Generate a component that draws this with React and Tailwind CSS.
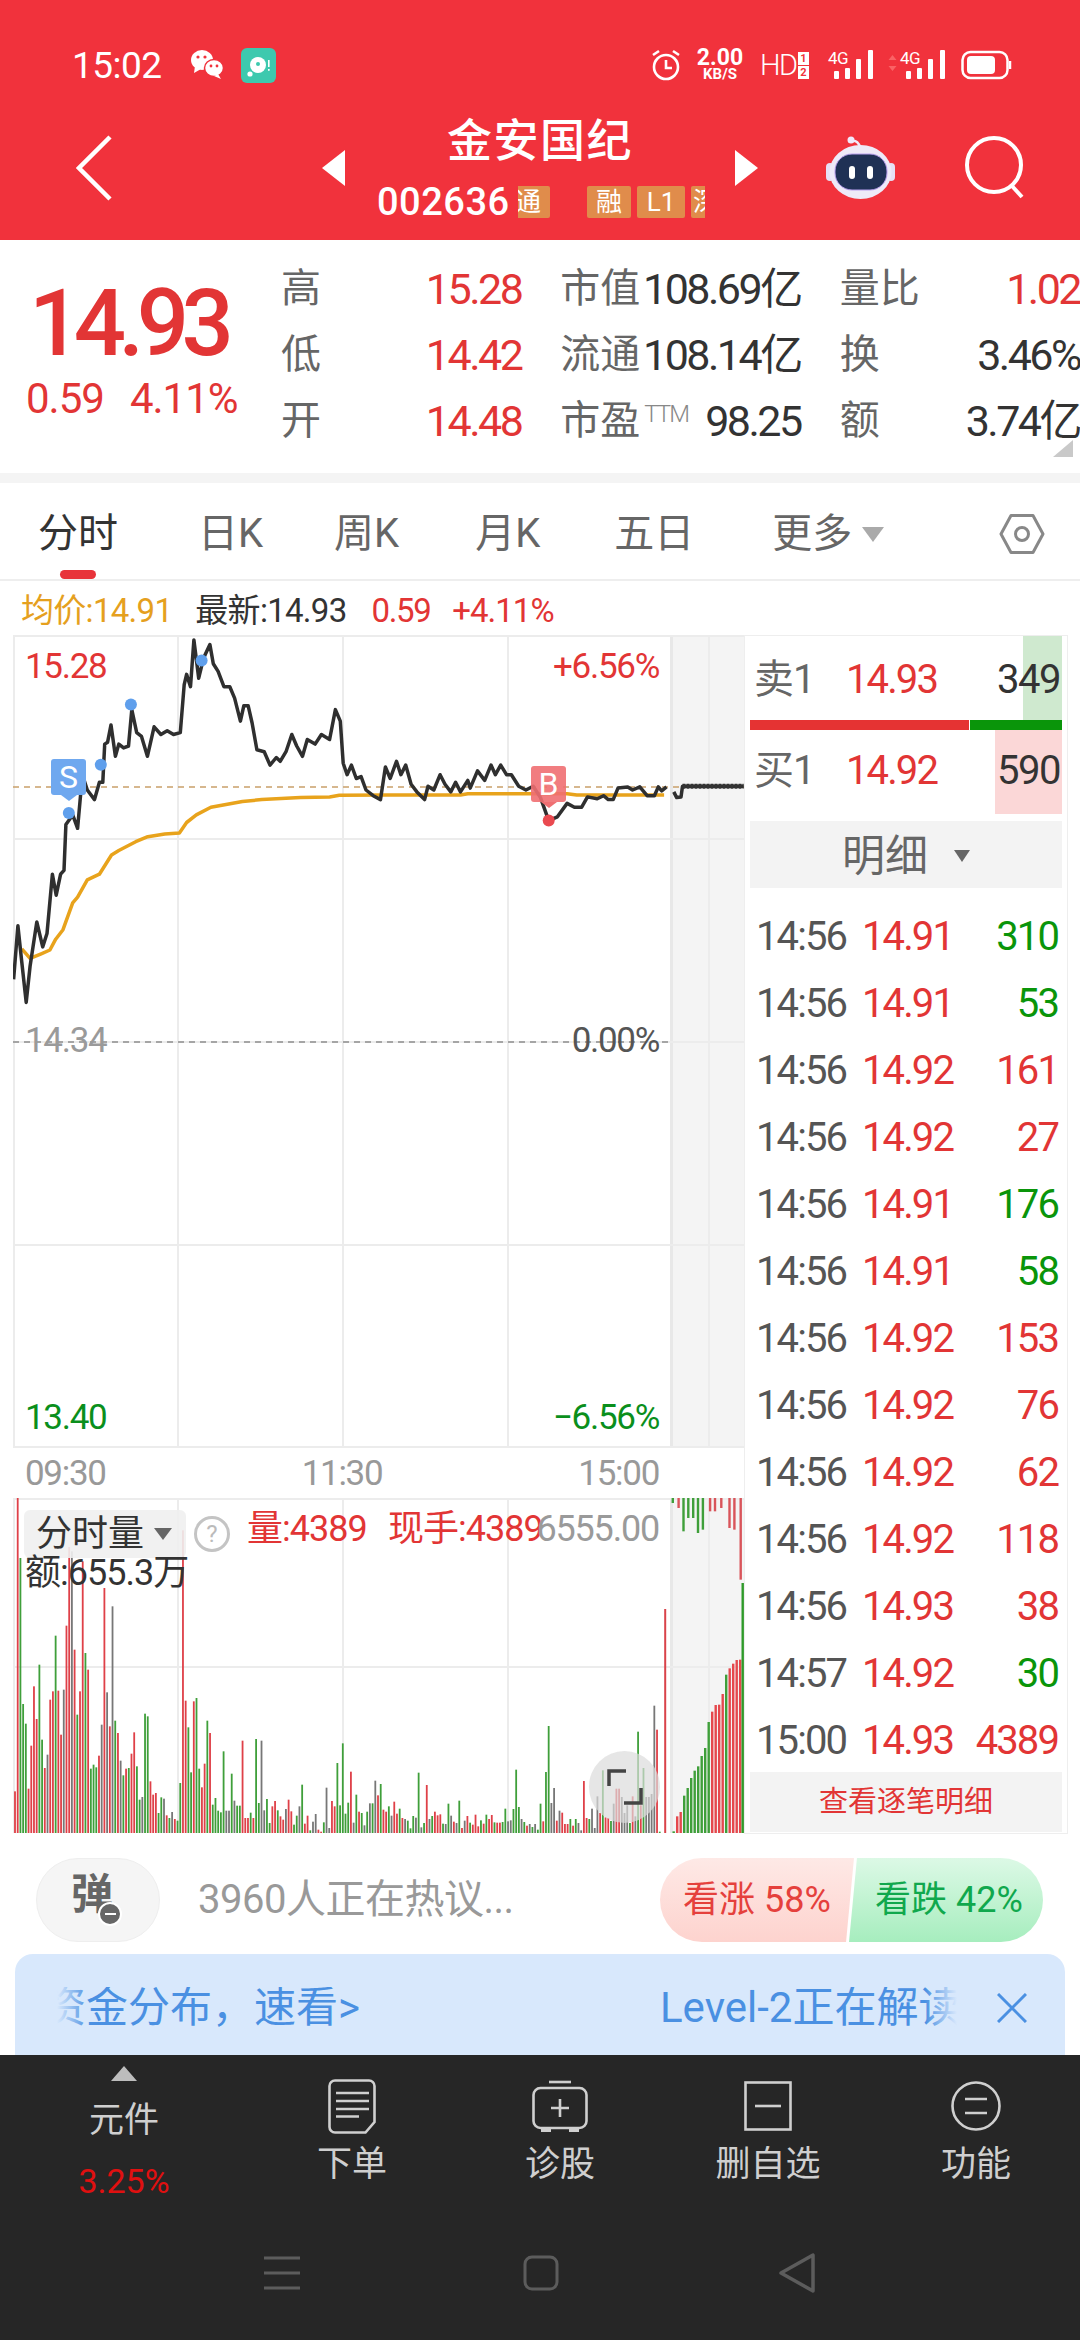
import React from 'react';

// price + avg lines, traced from the reference crop
const pricePts = [[28,1305],[37,1165],[45,1260],[54,1365],[62,1270],[76,1155],[88,1220],[97,1185],[108,1030],[116,1085],[125,1030],[132,1020],[136,900],[150,875],[160,910],[170,770],[180,810],[195,835],[205,790],[212,790],[216,690],[222,685],[229,640],[238,722],[245,690],[255,700],[265,695],[272,600],[282,660],[292,670],[304,722],[318,645],[332,665],[345,655],[358,665],[372,660],[380,535],[385,508],[393,540],[400,418],[410,518],[420,465],[433,430],[440,480],[450,500],[462,540],[474,540],[484,570],[496,630],[503,590],[512,590],[520,635],[530,705],[545,710],[557,745],[570,725],[578,735],[590,710],[602,665],[612,695],[624,722],[634,678],[650,690],[663,665],[680,678],[692,600],[702,630],[708,740],[716,770],[725,745],[735,780],[745,775],[755,810],[770,825],[785,835],[795,750],[805,780],[818,735],[827,770],[837,745],[848,795],[860,815],[876,835],[883,800],[895,810],[908,770],[918,795],[930,815],[940,790],[950,815],[965,785],[970,805],[985,760],[1000,785],[1013,745],[1022,770],[1033,745],[1045,770],[1055,770],[1070,800],[1085,810],[1100,800],[1115,830],[1132,890],[1150,880],[1170,845],[1185,855],[1200,855],[1212,828],[1232,833],[1245,825],[1255,835],[1265,835],[1275,805],[1295,802],[1305,810],[1320,802],[1335,825],[1350,825],[1358,802],[1365,812],[1375,802]];
const afterPts = [[1390,815],[1396,830],[1405,828],[1408,800],[1534,800]];
const avgPts = [[45,1225],[62,1250],[85,1238],[103,1228],[115,1200],[130,1175],[150,1105],[160,1090],[180,1045],[205,1030],[230,980],[245,968],[280,945],[305,932],[340,925],[370,922],[385,895],[405,875],[435,855],[500,840],[540,835],[620,830],[680,828],[700,824],[800,823],[950,823],[965,820],[1170,820],[1190,823],[1370,823]];
const cx = (z) => +(z / 2.063 - 13).toFixed(1);
const cy = (z) => +(z / 2.613 - 155).toFixed(1);
const line = (pts) => pts.map(([x, y]) => `${cx(x)},${cy(y)}`).join(' ');
const dots = [[142,870],[208,744],[270,587],[416,472]];

// c + top of bar in the crop, base 1030
const volA = 'r905 r25 g205 g643 g702 r897 r768 r590 r688 g525 g750 r835 x795 r630 r605 g438 r603 r735 x600 r408 r172 x185 r480 g675 r605 r215 g490 r540 g837 g825 g833 r798 x705 r295 x608 r710 x350 g693 r730 x813 g857 r837 g835 r792 r728 g830 g930 x922 g672 g680 r875 r915 r910 g970 g923 x927 r977 g985 x967 r988 g993 g880 r122 r633 g713 g848 r635 g625 g837 r893 r822 g693 r730 g945 g925 g963 g968 g785 x963 x963 g852 x933 g948 g948 r753'.split(' ');
// base 580
const volB = 'r535 r535 g519 r535 g298 g490 x303 x512 g478 g550 r500 r484 g512 r530 r540 x508 r480 r515 g555 g528 x500 g435 r552 r528 g572 x546 x523 r570 r576 g548 x444 x565 r484 r500 g370 g497 g311 g522 g489 r396 x549 g465 r516 g520 x557 g516 x491 g491 x423 r467 g433 r510 r516 g500 x528 r486 r522 g507 r535 x538 g543 g566 g529 x534 g399 x563 g550 r436 x538 g529 r516 r527 r524 g552 x553 g492 x528 r546 x550 g483 r565 x543 r529 g549 r555 r525 r560'.split(' ');
const volC = 'g542 r552 g525 r538 r526 g548 r549 r549 g547 g507 x545 x542 g508 g390 g502 x538 g547 r558 x553 g562 x553 g570 g492 r545 g397 g259 x490 x445 r543 x513 r519 r553 r553 g538 r558 g538 x550 x572 r424 r535 g538 x507 x565 x470 r520 g392 r533 r535 g544 x492 r447 r447 x472 x520 x497 g550 r470 x530 g276 r497 g385 x472 x472 x463 x198 r270 g576'.split(' ');
const barColor = { r: '#df4048', g: '#3f9f3a', x: '#777777' };
const bars = [
  ...volA.map((t) => [t[0], (1030 - +t.slice(1)) / 3]),
  ...volB.map((t) => [t[0], (580 - +t.slice(1)) / 3]),
  ...volC.map((t) => [t[0], (580 - +t.slice(1)) / 3]),
];
// bars past the close, in the grey zone
const lateBars = [['g',575],['r',530],['r',517],['g',468],['g',445],['g',415],['g',393],['g',380],['g',349],['g',325],['g',247],['r',216],['r',196],['r',195],['r',163],['g',105],['r',86],['r',72],['r',61],['r',60]];
const hangBars = [['g',1388,190],['r',1400,205],['g',1410,275],['g',1420,235],['g',1430,235],['g',1440,280],['g',1450,270],['r',1465,215],['r',1475,215],['r',1488,205],['r',1505,265],['r',1515,270],['r',1528,420]];

const ticks = [
  ['14:56','14.91','310','g'],['14:56','14.91','53','g'],['14:56','14.92','161','r'],['14:56','14.92','27','r'],
  ['14:56','14.91','176','g'],['14:56','14.91','58','g'],['14:56','14.92','153','r'],['14:56','14.92','76','r'],
  ['14:56','14.92','62','r'],['14:56','14.92','118','r'],['14:56','14.93','38','r'],['14:57','14.92','30','g'],['15:00','14.93','4389','r'],
];

function Grid({ height, rows }) {
  return (
    <>
      <rect x="658" y="0" width="73" height={height} fill="#f4f4f4" />
      {[0, 164, 329, 494, 695].map((x) => <rect key={x} x={x} y="0" width="2" height={height} fill="#ececec" />)}
      <rect x="657" y="0" width="3" height={height} fill="#e8e8e8" />
      {rows.map((y) => <rect key={y} x="0" y={y} width="731" height="2" fill="#ececec" />)}
    </>
  );
}

function PriceChart() {
  return (
    <div className="relative h-[813px] w-[731px] text-[35px] leading-none tracking-[-1.3px]">
      <svg className="absolute inset-0" width="731" height="813">
        <Grid height={813} rows={[0, 203, 406, 609, 811]} />
        <line x1="0" x2="731" y1="152" y2="152" stroke="#c9a06a" strokeWidth="1.5" strokeDasharray="6 5" />
        <line x1="0" x2="660" y1="407" y2="407" stroke="#a5a5a5" strokeWidth="2" strokeDasharray="6 5" />
        <polyline points={line(avgPts)} fill="none" stroke="#e8a31c" strokeWidth="3.5" strokeLinejoin="round" />
        <polyline points={line(pricePts)} fill="none" stroke="#2f2f2f" strokeWidth="3.5" strokeLinejoin="round" />
        <polyline points={line(afterPts)} fill="none" stroke="#2f2f2f" strokeWidth="3.5" strokeLinejoin="round" />
        <line x1={cx(1408)} x2={cx(1534)} y1={cy(800)} y2={cy(800)} stroke="#333" strokeWidth="5" strokeDasharray="3 1" />
        {dots.map(([x, y]) => <circle key={x} cx={cx(x)} cy={cy(y)} r="6" fill="#5f9fec" />)}
        <circle cx={cx(1132)} cy={cy(890)} r="6" fill="#ea4a50" />
      </svg>
      <span className="absolute left-[12px] top-[14px] text-[#e23535]">15.28</span>
      <span className="absolute right-[85px] top-[14px] text-[#e23535]">+6.56%</span>
      <span className="absolute left-[12px] top-[388px] text-[#9a9a9a]">14.34</span>
      <span className="absolute right-[85px] top-[388px] text-[#555]">0.00%</span>
      <span className="absolute left-[12px] top-[765px] text-[#0a8f1c]">13.40</span>
      <span className="absolute right-[85px] top-[765px] text-[#0a8f1c]">−6.56%</span>
      <Marker left={38} top={124} bg="bg-[#6fa8ef]" tail="border-t-[#6fa8ef]" label="S" />
      <Marker left={518} top={131} bg="bg-[#ef6f72]/90" tail="border-t-[#ef6f72]" label="B" />
    </div>
  );
}

function Marker({ left, top, bg, tail, label }) {
  return (
    <div className="absolute flex flex-col items-center" style={{ left, top }}>
      <div className={`flex h-[36px] w-[35px] items-center justify-center rounded-[3px] text-[32px] tracking-normal text-white ${bg}`}>{label}</div>
      <div className={`h-0 w-0 border-x-[8px] border-t-[6px] border-x-transparent ${tail}`} />
    </div>
  );
}

function VolumeChart() {
  return (
    <div className="relative h-[335px] w-[731px] leading-none">
      <svg className="absolute inset-0" width="731" height="335">
        <Grid height={335} rows={[0, 168]} />
        {bars.map(([c, h], i) => (
          <rect key={i} x={2 + i * 2.709 - 0.9} y={335 - h} width="1.8" height={h} fill={barColor[c]} />
        ))}
        <rect x="651.2" y="111" width="2" height="224" fill="#d9434a" />
        {lateBars.map(([c, top], i) => {
          const h = (580 - top) / 3;
          return <rect key={i} x={659.5 + i * 3.5} y={335 - h} width="2.4" height={h} fill={c === 'r' ? '#e5484d' : '#3f9f3a'} />;
        })}
        <rect x="728.5" y="85" width="2.4" height="250" fill="#2f9a2a" />
        {hangBars.map(([c, x, b]) => (
          <rect key={x} x={cx(x) - 1.2} y="0" width="2.4" height={(b - 175) / 3} fill={c === 'r' ? '#d9545a' : '#3f9f3a'} />
        ))}
      </svg>
      <div className="absolute left-[11px] top-[12px] flex h-[48px] w-[162px] items-center rounded-[6px] bg-[#efefef]/90 pl-[12px] text-[36px] text-[#333]">
        分时量
        <div className="ml-[10px] h-0 w-0 border-x-[9px] border-t-[12px] border-x-transparent border-t-[#666]" />
      </div>
      <div className="absolute left-[181px] top-[18px] flex h-[36px] w-[36px] items-center justify-center rounded-full border-[3px] border-[#c4c4c4] text-[24px] text-[#bbb]">?</div>
      <span className="absolute left-[234px] top-[13px] text-[36px] tracking-[-1px] text-[#e23535]">量:4389</span>
      <span className="absolute left-[375px] top-[13px] text-[36px] tracking-[-1px] text-[#e23535]">现手:4389</span>
      <span className="absolute right-[85px] top-[13px] text-[36px] tracking-[-1.2px] text-[#9a9a9a]">6555.00</span>
      <span className="absolute left-[12px] top-[57px] text-[36px] tracking-[-1px] text-[#333]">额:655.3万</span>
      <div className="absolute left-[576px] top-[253px] flex h-[72px] w-[71px] items-center justify-center rounded-full bg-[#dcdcdc]/70">
        <svg width="40" height="40" viewBox="0 0 40 40" fill="none" stroke="#444" strokeWidth="3.5">
          <path d="M4 19V4h17" />
          <path d="M36 21v15H19" />
        </svg>
      </div>
    </div>
  );
}

function DepthPanel() {
  return (
    <div className="flex h-[1199px] w-[324px] flex-col border border-[#eeeeee] px-[5px] leading-none">
      <div className="relative flex h-[84px] items-center pt-[3px] text-[40px]">
        <div className="absolute bottom-0 right-0 top-0 w-[39px] bg-[#cfe9cf]" />
        <span className="relative ml-[4px] w-[92px] tracking-[-1px] text-[#666]">卖1</span>
        <span className="relative tracking-[-1.9px] text-[#e23535]">14.93</span>
        <span className="relative ml-auto mr-[2px] tracking-[-1.5px] text-[#333]">349</span>
      </div>
      <div className="flex h-[10px]">
        <div className="w-[219px] bg-[#e53333]" />
        <div className="ml-[1px] flex-1 bg-[#0a950a]" />
      </div>
      <div className="relative flex h-[84px] items-center pb-[3px] text-[40px]">
        <div className="absolute bottom-0 right-0 top-0 w-[67px] bg-[#fbd7d7]" />
        <span className="relative ml-[4px] w-[92px] tracking-[-1px] text-[#666]">买1</span>
        <span className="relative tracking-[-1.9px] text-[#e23535]">14.92</span>
        <span className="relative ml-auto mr-[2px] tracking-[-1.5px] text-[#333]">590</span>
      </div>
      <div className="mt-[7px] flex h-[67px] items-center justify-center bg-[#f3f3f3] pt-[3px] text-[43px] text-[#666]">
        明细
        <div className="ml-[26px] h-0 w-0 border-x-[8px] border-t-[12px] border-x-transparent border-t-[#666]" />
      </div>
      <div className="mt-[15px]">
        {ticks.map(([time, price, vol, c], i) => (
          <div key={i} className="flex h-[67px] items-center text-[40px] tracking-[-1.9px]">
            <span className="ml-[6px] w-[106px] text-[#555]">{time}</span>
            <span className="text-[#e23535]">{price}</span>
            <span className={`ml-auto mr-[4px] ${c === 'g' ? 'text-[#0a950a]' : 'text-[#e23535]'}`}>{vol}</span>
          </div>
        ))}
      </div>
      <div className="-mt-[2px] flex h-[60px] items-center justify-center bg-[#f3f3f3] text-[29px] text-[#e23535]">查看逐笔明细</div>
    </div>
  );
}

function StatusBar() {
  return (
    <div className="flex h-[100px] items-center pt-[30px] text-white">
      <span className="ml-[72px] w-[91px] text-[37px] leading-none tracking-[-0.5px]">15:02</span>
      <svg className="ml-[27px]" width="34" height="32" viewBox="0 0 34 32" fill="white">
        <ellipse cx="12" cy="11" rx="11" ry="10" />
        <path d="M5 17l-1 7 7-4z" />
        <ellipse cx="24" cy="19" rx="9.5" ry="8.5" stroke="#f1323c" strokeWidth="1.5" />
        <path d="M28 25l3 5-7-3z" />
        <circle cx="8" cy="8" r="1.6" fill="#f1323c" /><circle cx="15" cy="8" r="1.6" fill="#f1323c" />
        <circle cx="21" cy="17" r="1.4" fill="#f1323c" /><circle cx="27" cy="17" r="1.4" fill="#f1323c" />
      </svg>
      <svg className="ml-[17px]" width="35" height="35" viewBox="0 0 35 35">
        <rect width="35" height="35" rx="6" fill="#3dc9ae" />
        <circle cx="17" cy="17" r="8" fill="white" />
        <circle cx="17" cy="16" r="2" fill="#3dc9ae" />
        <circle cx="9" cy="26" r="2.6" fill="white" />
        <rect x="27" y="12" width="1.6" height="7" fill="white" /><rect x="27" y="21" width="1.6" height="1.8" fill="white" />
      </svg>
      <svg className="ml-[375px]" width="30" height="32" viewBox="0 0 30 32" fill="none" stroke="white" strokeWidth="2.6">
        <circle cx="15" cy="18" r="12" />
        <path d="M15 11v8h6M2 6l6-4M28 6l-6-4" />
      </svg>
      <div className="ml-[15px] flex w-[48px] flex-col items-center font-bold leading-none">
        <span className="h-[19px] text-[23px] leading-[19px]">2.00</span>
        <span className="h-[15px] text-[15px] leading-[15px]">KB/S</span>
      </div>
      <span className="ml-[16px] w-[38px] text-[29px] font-light leading-none tracking-[-1.5px]">HD</span>
      <div className="flex w-[11px] flex-col gap-[1px] text-center text-[11px] font-bold leading-[13px] text-[#f1323c]">
        <span className="h-[13px] bg-white">1</span>
        <span className="h-[13px] bg-white">2</span>
      </div>
      <Signal className="ml-[19px]" />
      <svg className="ml-[14px]" width="9" height="30" viewBox="0 0 9 30" fill="#f77" opacity="0.7">
        <path d="M4.5 5l4 5h-8zM4.5 21l4-5h-8z" />
      </svg>
      <Signal className="ml-[3px]" />
      <svg className="ml-[15px]" width="51" height="30" viewBox="0 0 51 30" fill="none">
        <rect x="1.5" y="2" width="45" height="26" rx="8" stroke="white" strokeWidth="2.5" />
        <rect x="6" y="6" width="28" height="18" rx="4" fill="white" />
        <path d="M49 11v8" stroke="white" strokeWidth="2.5" />
      </svg>
    </div>
  );
}

function Signal({ className }) {
  return (
    <div className={`relative h-[30px] w-[46px] ${className}`}>
      <span className="absolute left-0 top-0 text-[17px] leading-[17px] tracking-[-0.5px]">4G</span>
      <svg className="absolute inset-0" width="46" height="30" viewBox="0 0 46 30" fill="white">
        <rect x="6" y="21" width="5" height="8" rx="1" />
        <rect x="17" y="18" width="5" height="11" rx="1" />
        <rect x="28" y="9" width="5" height="20" rx="1" />
        <rect x="40" y="0" width="5" height="29" rx="1" />
      </svg>
    </div>
  );
}

function Robot() {
  return (
    <svg width="69" height="64" viewBox="0 0 69 64">
      <path d="M25 5c4-1 7 0 9 6" fill="none" stroke="#f1e9fb" strokeWidth="2.5" />
      <circle cx="25" cy="4" r="3.5" fill="#f1e9fb" />
      <rect x="0" y="27" width="8" height="18" rx="4" fill="#e6e0f5" />
      <rect x="61" y="27" width="8" height="18" rx="4" fill="#e6e0f5" />
      <ellipse cx="34.5" cy="36" rx="31" ry="27" fill="#eeeaf8" />
      <rect x="9" y="18" width="52" height="36" rx="17" fill="#1f3155" stroke="#b9a0ee" strokeWidth="1" />
      <rect x="23" y="30" width="6" height="13" rx="3" fill="white" />
      <rect x="41" y="30" width="6" height="13" rx="3" fill="white" />
    </svg>
  );
}

function Header() {
  const badge = 'flex h-[32px] shrink-0 items-center justify-center overflow-hidden rounded-[2px] bg-[#e08c4b] text-[26px] text-white';
  return (
    <div className="h-[240px] shrink-0 bg-[#f1323c] text-white">
      <StatusBar />
      <div className="flex h-[136px] items-center leading-none">
        <svg className="ml-[76px]" width="36" height="66" viewBox="0 0 36 66" fill="none" stroke="white" strokeWidth="4.5">
          <path d="M34 2L3 33l31 31" />
        </svg>
        <div className="ml-[210px] h-0 w-0 border-y-[18px] border-r-[23px] border-y-transparent border-r-white" />
        <div className="flex w-[390px] flex-col">
          <div className="text-center text-[45px] font-medium leading-[48px] tracking-[1.5px]">金安国纪</div>
          <div className="mt-[20px] flex h-[32px] items-center pl-[32px]">
            <span className="w-[141px] text-[38px] font-medium tracking-[0.5px]">002636</span>
            <div className="flex w-[187px] gap-[6px] overflow-hidden">
              <div className={`-ml-[12px] mr-[31px] w-[44px] ${badge}`}>通</div>
              <div className={`w-[44px] ${badge}`}>融</div>
              <div className={`w-[48px] ${badge}`}>L1</div>
              <div className={`w-[44px] justify-start pl-[2px] ${badge}`}>深</div>
            </div>
          </div>
        </div>
        <div className="h-0 w-0 border-y-[18px] border-l-[23px] border-y-transparent border-l-white" />
        <div className="ml-[68px]"><Robot /></div>
        <svg className="ml-[70px]" width="62" height="64" viewBox="0 0 62 64" fill="none" stroke="white" strokeWidth="4">
          <circle cx="29" cy="29" r="27" />
          <path d="M47 50l10 11" />
        </svg>
      </div>
    </div>
  );
}

function Cell({ label, value, red, sup }) {
  return (
    <div className="flex items-center justify-between whitespace-nowrap">
      <span className="text-[40px] text-[#666]">
        {label}
        {sup ? <sup className="ml-[4px] text-[24px] font-light tracking-[-2px] text-[#888]">{sup}</sup> : null}
      </span>
      <span className={`text-[43px] tracking-[-2.5px] ${red ? 'text-[#e23535]' : 'text-[#333]'}`}>{value}</span>
    </div>
  );
}

function InfoPanel() {
  return (
    <div className="relative flex h-[233px] shrink-0 leading-none">
      <div className="w-[281px] pl-[29px] pt-[38px] text-[#e23535]">
        <div className="text-[92px] font-medium leading-[92px] tracking-[-7.5px]">14.93</div>
        <div className="ml-[-3px] mt-[8px] flex gap-[26px] text-[42px] leading-[42px] tracking-[-1px]">
          <span>0.59</span>
          <span>4.11%</span>
        </div>
      </div>
      <div className="grid h-[214px] w-[799px] grid-cols-3 grid-rows-3 gap-x-[39px] pt-[16px]">
        <Cell label="高" value="15.28" red />
        <Cell label="市值" value="108.69亿" />
        <Cell label="量比" value="1.02" red />
        <Cell label="低" value="14.42" red />
        <Cell label="流通" value="108.14亿" />
        <Cell label="换" value="3.46%" />
        <Cell label="开" value="14.48" red />
        <Cell label="市盈" sup="TTM" value="98.25" />
        <Cell label="额" value="3.74亿" />
      </div>
      <div className="absolute bottom-[16px] right-[7px] h-0 w-0 border-b-[17px] border-l-[20px] border-b-[#c9c9c9] border-l-transparent" />
    </div>
  );
}

function Tabs() {
  return (
    <div className="relative flex h-[98px] shrink-0 items-center border-b-2 border-[#eeeeee] pt-[6px] text-[40px] leading-none text-[#666]">
      <span className="ml-[38px] text-[#333]">分时</span>
      <span className="ml-[80px]">日K</span>
      <span className="ml-[71px]">周K</span>
      <span className="ml-[76px]">月K</span>
      <span className="ml-[74px]">五日</span>
      <span className="ml-[78px]">更多</span>
      <div className="ml-[10px] h-0 w-0 border-x-[11px] border-t-[15px] border-x-transparent border-t-[#aaa]" />
      <svg className="ml-[115px]" width="46" height="42" viewBox="0 0 46 42" fill="none" stroke="#888" strokeWidth="3">
        <path d="M12 2.5h22L44 21 34 39.5H12L2 21z" strokeLinejoin="round" />
        <circle cx="23" cy="21" r="6.5" />
      </svg>
      <div className="absolute bottom-0 left-[60px] h-[9px] w-[36px] rounded-full bg-[#e8333a]" />
    </div>
  );
}

function NavIcon({ children }) {
  return <div className="flex h-[56px] items-center justify-center">{children}</div>;
}

function BottomNav() {
  const item = 'flex w-[208px] flex-col items-center pt-[23px] text-[35px] leading-none text-[#cfcfcf]';
  return (
    <div className="h-[285px] shrink-0 bg-[#262626]">
      <div className="flex h-[190px]">
        <div className="flex w-[248px] flex-col items-center pt-[11px] leading-none">
          <div className="h-0 w-0 border-x-[13px] border-b-[15px] border-x-transparent border-b-[#bdbdbd]" />
          <span className="mt-[22px] text-[35px] text-[#cfcfcf]">元件</span>
          <span className="mt-[26px] text-[34px] text-[#e01010]">3.25%</span>
        </div>
        <div className={item}>
          <NavIcon>
            <svg width="48" height="55" viewBox="0 0 48 55" fill="none" stroke="#cfcfcf" strokeWidth="2.6">
              <path d="M7 1.5h34a5.5 5.5 0 0 1 5.5 5.5v36l-9 10.500H7A5.500 5.500 0 0 1 1.500 48V7A5.500 5.500 0 0 1 7 1.500z" />
              <path d="M8 14h33M8 22h33M8 30h33M8 37.500h23" />
            </svg>
          </NavIcon>
          <span className="mt-[13px]">下单</span>
        </div>
        <div className={item}>
          <NavIcon>
            <svg width="56" height="52" viewBox="0 0 56 52" fill="none" stroke="#cfcfcf" strokeWidth="2.6">
              <path d="M17 2h22" />
              <rect x="1.500" y="8" width="53" height="40" rx="7" />
              <path d="M28 19v18M19 28h18" />
              <path d="M9 50h10M37 50h10" strokeWidth="4" />
            </svg>
          </NavIcon>
          <span className="mt-[13px]">诊股</span>
        </div>
        <div className={item}>
          <NavIcon>
            <svg width="48" height="50" viewBox="0 0 48 50" fill="none" stroke="#cfcfcf" strokeWidth="2.6">
              <rect x="1.500" y="1.500" width="45" height="47" />
              <path d="M11 25h26" />
            </svg>
          </NavIcon>
          <span className="mt-[13px]">删自选</span>
        </div>
        <div className={item}>
          <NavIcon>
            <svg width="50" height="50" viewBox="0 0 50 50" fill="none" stroke="#cfcfcf" strokeWidth="2.6">
              <circle cx="25" cy="25" r="23.500" />
              <path d="M14 18h22M14 32h22" />
            </svg>
          </NavIcon>
          <span className="mt-[13px]">功能</span>
        </div>
      </div>
      <div className="flex h-[56px] items-center pl-[264px]">
        <svg width="36" height="34" viewBox="0 0 36 34" fill="none" stroke="#5c5c5c" strokeWidth="3">
          <path d="M0 2h36M0 17h36M0 32h36" />
        </svg>
        <svg className="ml-[223px]" width="36" height="36" viewBox="0 0 36 36" fill="none" stroke="#5c5c5c" strokeWidth="3">
          <rect x="2" y="2" width="32" height="32" rx="7" />
        </svg>
        <svg className="ml-[219px]" width="38" height="40" viewBox="0 0 38 40" fill="none" stroke="#5c5c5c" strokeWidth="3.5" strokeLinejoin="round">
          <path d="M35 2v36L3 20z" />
        </svg>
      </div>
    </div>
  );
}

function Footer() {
  return (
    <div className="h-[197px] shrink-0 leading-none">
      <div className="flex h-[84px] items-center pl-[36px]">
        <div className="relative flex h-[84px] w-[124px] items-center justify-center rounded-[42px] border border-[#eeeeee] bg-[#f5f5f5] pb-[10px] pr-[12px] text-[42px] font-bold text-[#666]">
          弹
          <div className="absolute bottom-[15px] right-[37px] flex h-[24px] w-[24px] items-center justify-center rounded-full border-2 border-white bg-[#666]">
            <div className="h-[2px] w-[11px] bg-white" />
          </div>
        </div>
        <span className="ml-[38px] w-[462px] text-[40px] tracking-[-0.5px] text-[#999]">3960人正在热议...</span>
        <div className="flex h-[84px] w-[383px] text-[36px]">
          <div className="flex w-[194px] items-center rounded-l-[42px] bg-gradient-to-b from-[#fee9e6] to-[#fdd3ce] pl-[23px] text-[#e5403c] [clip-path:polygon(0_0,100%_0,95.9%_100%,0_100%)]">看涨 58%</div>
          <div className="-ml-[5px] flex w-[194px] items-center rounded-r-[42px] bg-gradient-to-b from-[#dcf9e6] to-[#a6edbe] pl-[26px] text-[#10a84d] [clip-path:polygon(4.1%_0,100%_0,100%_100%,0_100%)]">看跌 42%</div>
        </div>
      </div>
      <div className="mx-[15px] mt-[12px] flex h-[101px] items-center rounded-t-[18px] bg-[#d8e8fc] pt-[7px] text-[42px] text-[#4a90e2]">
        <div className="relative ml-[42px] flex w-[303px] justify-end overflow-hidden whitespace-nowrap">
          <span className="shrink-0">资金分布，速看&gt;</span>
          <div className="absolute inset-y-0 left-0 w-[32px] bg-gradient-to-r from-[#d8e8fc] to-transparent" />
        </div>
        <div className="relative ml-[300px] w-[297px] overflow-hidden whitespace-nowrap">
          <div>Level-2正在解读</div>
          <div className="absolute inset-y-0 right-0 w-[32px] bg-gradient-to-l from-[#d8e8fc] to-transparent" />
        </div>
        <svg className="ml-[40px]" width="30" height="30" viewBox="0 0 30 30" fill="none" stroke="#4a90e2" strokeWidth="3">
          <path d="M1 1l28 28M29 1L1 29" />
        </svg>
      </div>
    </div>
  );
}

export default function App() {
  return (
    <div className="flex h-[2340px] w-[1080px] flex-col overflow-hidden bg-white [font-family:Roboto,'Noto_Sans_CJK_SC',sans-serif]">
      <Header />
      <InfoPanel />
      <div className="h-[10px] shrink-0 bg-[#f4f4f4]" />
      <Tabs />
      <div className="flex h-[54px] shrink-0 items-center pt-[4px] text-[33px] leading-none tracking-[-0.7px]">
        <span className="ml-[21px] text-[#e5a01e]">均价:14.91</span>
        <span className="ml-[23px] text-[#333]">最新:14.93</span>
        <span className="ml-[25px] tracking-[-1.4px] text-[#e23535]">0.59</span>
        <span className="ml-[22px] tracking-[-1px] text-[#e23535]">+4.11%</span>
      </div>
      <div className="flex h-[1199px] shrink-0">
        <div className="ml-[13px] w-[731px]">
          <PriceChart />
          <div className="flex h-[50px] items-center text-[35px] leading-none tracking-[-1.3px] text-[#999]">
            <span className="ml-[12px]">09:30</span>
            <span className="ml-[196px]">11:30</span>
            <span className="ml-[196px]">15:00</span>
          </div>
          <VolumeChart />
        </div>
        <DepthPanel />
      </div>
      <div className="h-[24px] shrink-0" />
      <Footer />
      <BottomNav />
    </div>
  );
}
